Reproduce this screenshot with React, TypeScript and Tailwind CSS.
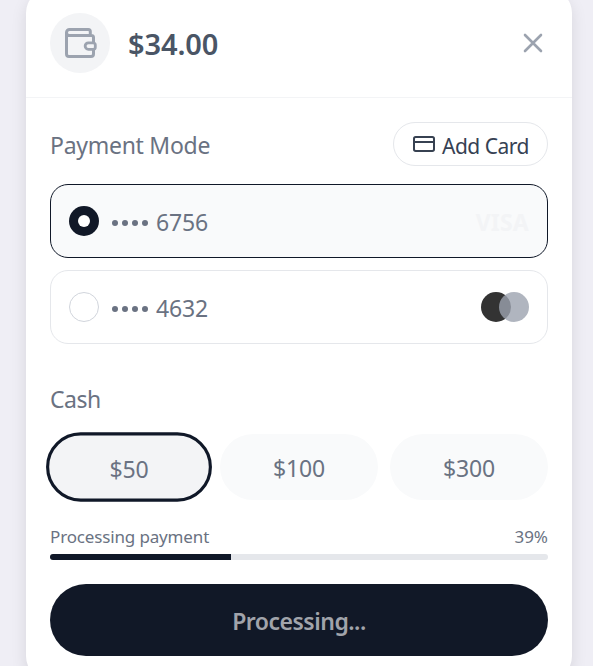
import React from 'react';

function WalletIcon() {
  return (
    <svg width="34" height="32" viewBox="0 0 34 32" fill="none" stroke="#9ca3af" strokeWidth="3" strokeLinejoin="round">
      <path d="M27.3 8.5V4.5a2 2 0 0 0-2-2H6.5a3 3 0 0 0-3 3v21.5a2.5 2.5 0 0 0 2.5 2.5h22a2.5 2.5 0 0 0 2.5-2.5V10.5a2 2 0 0 0-2-2H6.5a3 3 0 0 1-3-3" />
      <path d="M25.4 15.8h4.9a2 2 0 0 1 2 2v2.5a2 2 0 0 1-2 2h-4.9a3.2 3.2 0 0 1 0-6.5z" fill="#f3f4f6" strokeWidth="2.8" />
    </svg>
  );
}

function CardIcon() {
  return (
    <svg width="22" height="16" viewBox="0 0 22 16" fill="none" stroke="#374151" strokeWidth="2">
      <rect x="1" y="1" width="20" height="14" rx="1.7" />
      <path d="M1 6h20" />
    </svg>
  );
}

function Method({ digits, selected, children }: { digits: string; selected?: boolean; children: React.ReactNode }) {
  return (
    <div className={`flex h-[74px] items-center rounded-[18px] border px-[18px] ${selected ? 'border-gray-900 bg-[#f9fafb]' : 'border-gray-200 bg-white'}`}>
      {selected ? (
        <span className="flex size-[30px] items-center justify-center rounded-full bg-[#111827]">
          <span className="size-3 rounded-full bg-white" />
        </span>
      ) : (
        <span className="size-[30px] rounded-full border border-gray-300 bg-white" />
      )}
      <span className="ml-[13px] flex items-center gap-1 pt-1">
        {[0, 1, 2, 3].map((i) => (
          <span key={i} className="size-[6px] rounded-full bg-gray-500" />
        ))}
      </span>
      <span className="ml-2 pt-[3px] text-[23px] leading-none tracking-[-0.15px] text-gray-500">{digits}</span>
      <span className="ml-auto">{children}</span>
    </div>
  );
}

export default function App() {
  return (
    <div className="h-[666px] w-[593px] overflow-hidden bg-[#efeef5] font-['Noto_Sans','Open_Sans',sans-serif]">
      <div className="mt-[-11px] ml-[26px] h-[691px] w-[546px] rounded-3xl bg-white shadow-[0_6px_16px_rgba(0,0,0,0.10)]">
        <header className="flex h-[109px] items-center border-b border-gray-100 px-6">
          <div className="flex size-[60px] items-center justify-center rounded-full bg-gray-100">
            <WalletIcon />
          </div>
          <span className="ml-[18px] text-[29px] leading-none font-semibold tracking-[-0.1px] text-gray-600">$34.00</span>
          <svg className="mr-[5px] ml-auto" width="20" height="20" viewBox="0 0 20 20" stroke="#9ca3af" strokeWidth="2.6" strokeLinecap="round">
            <path d="M2 2 18 18M18 2 2 18" />
          </svg>
        </header>
        <main className="px-6 pt-6">
          <div className="flex h-11 items-center justify-between">
            <h2 className="pt-[2px] text-[23px] leading-none tracking-[-0.27px] text-gray-500">Payment Mode</h2>
            <button className="flex h-11 w-[155px] items-center rounded-full border border-gray-200 pl-[19px] text-gray-700">
              <CardIcon />
              <span className="ml-[7px] pt-[4px] text-[21px] leading-none tracking-[-0.5px] whitespace-nowrap">Add Card</span>
            </button>
          </div>
          <div className="mt-[18px] flex flex-col gap-3">
            <Method digits="6756" selected>
              <span className="block pt-[2px] text-[23px] leading-none font-bold tracking-[0.2px] text-gray-100">VISA</span>
            </Method>
            <Method digits="4632">
              <span className="flex">
                <span className="size-[30px] rounded-full bg-[#333333]" />
                <span className="-ml-3 size-[30px] rounded-full bg-[#9ca3af]/80" />
              </span>
            </Method>
          </div>
          <h2 className="mt-[43px] h-[47px] pt-px text-[23px] leading-none tracking-[-0.5px] text-gray-500">Cash</h2>
          <div className="grid grid-cols-3 gap-3 text-[23px] leading-none tracking-[-0.2px] text-gray-500">
            <button className="h-[66px] scale-105 rounded-full border-[3px] border-gray-900 bg-gray-100 pt-[1px] text-[22px]">$50</button>
            <button className="h-[66px] rounded-full bg-gray-50 pt-[3px]">$100</button>
            <button className="h-[66px] rounded-full bg-gray-50 pt-[3px]">$300</button>
          </div>
          <div className="mt-7 flex h-[26px] justify-between text-[17px] leading-none text-gray-500">
            <span className="tracking-[-0.15px]">Processing payment</span>
            <span>39%</span>
          </div>
          <div className="h-[6px] overflow-hidden rounded-full bg-gray-200">
            <div className="h-full w-[181px] bg-gray-900" />
          </div>
          <button className="mt-6 h-[72px] w-full rounded-full bg-[#111827] pt-[3px] text-[23px] leading-none font-semibold tracking-[-0.5px] text-[#a1a4ab]">Processing...</button>
        </main>
      </div>
    </div>
  );
}
